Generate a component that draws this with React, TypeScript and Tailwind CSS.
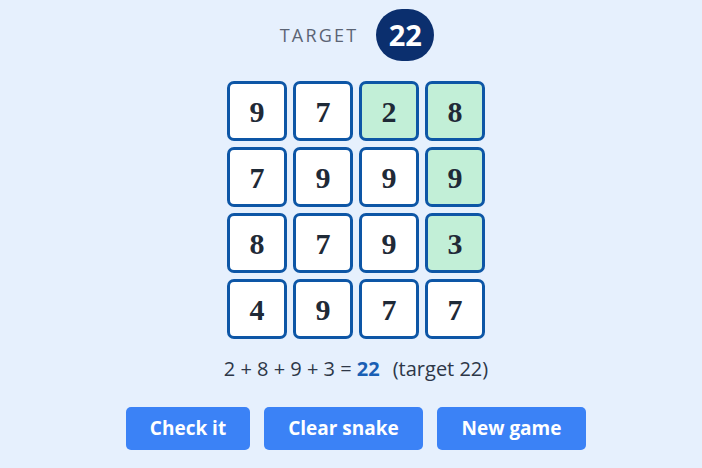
import React from "react";

const grid = [
  [9, 7, 2, 8],
  [7, 9, 9, 9],
  [8, 7, 9, 3],
  [4, 9, 7, 7],
];

// cells that belong to the current snake path
const snake = new Set(["0-2", "0-3", "1-3", "2-3"]);

export default function App() {
  return (
    <div
      className="w-[702px] h-[468px] bg-[#e6f0fd] flex flex-col items-center pl-[10px]"
      style={{ fontFamily: '"Open Sans", sans-serif' }}
    >
      <div className="flex items-center gap-[18px] mt-[9px] ml-[2px]">
        <span className="text-[18px] tracking-[2.2px] text-[#5b6474]">TARGET</span>
        <div className="w-[58px] h-[52px] shrink-0 rounded-full bg-[#0b2f6e] flex items-center justify-center text-white font-bold text-[29px]">
          22
        </div>
      </div>

      <div className="grid grid-cols-4 gap-[6px] mt-[20px]">
        {grid.map((row, r) =>
          row.map((v, c) => {
            const on = snake.has(`${r}-${c}`);
            return (
              <div
                key={`${r}-${c}`}
                className={`w-[60px] h-[60px] rounded-[7px] border-[3px] border-[#0d56a6] flex items-center justify-center text-[30px] font-bold text-[#1f2a37] ${
                  on ? "bg-[#c2efd7]" : "bg-white"
                }`}
                style={{ fontFamily: '"Liberation Serif", serif' }}
              >
                {v}
              </div>
            );
          })
        )}
      </div>

      <div className="mt-[16px] text-[20px] leading-[28px] text-[#2d3748]">
        2 + 8 + 9 + 3 = <span className="font-bold text-[#1a5fb4]">22</span>
        <span className="ml-[13px]">(target 22)</span>
      </div>

      <div className="flex gap-[14px] mt-[24px]">
        <button className="w-[124px] h-[43px] rounded-[5px] bg-[#3b82f6] text-white font-bold text-[19px]">
          Check it
        </button>
        <button className="w-[159px] h-[43px] rounded-[5px] bg-[#3b82f6] text-white font-bold text-[19px]">
          Clear snake
        </button>
        <button className="w-[149px] h-[43px] rounded-[5px] bg-[#3b82f6] text-white font-bold text-[19px]">
          New game
        </button>
      </div>
    </div>
  );
}
